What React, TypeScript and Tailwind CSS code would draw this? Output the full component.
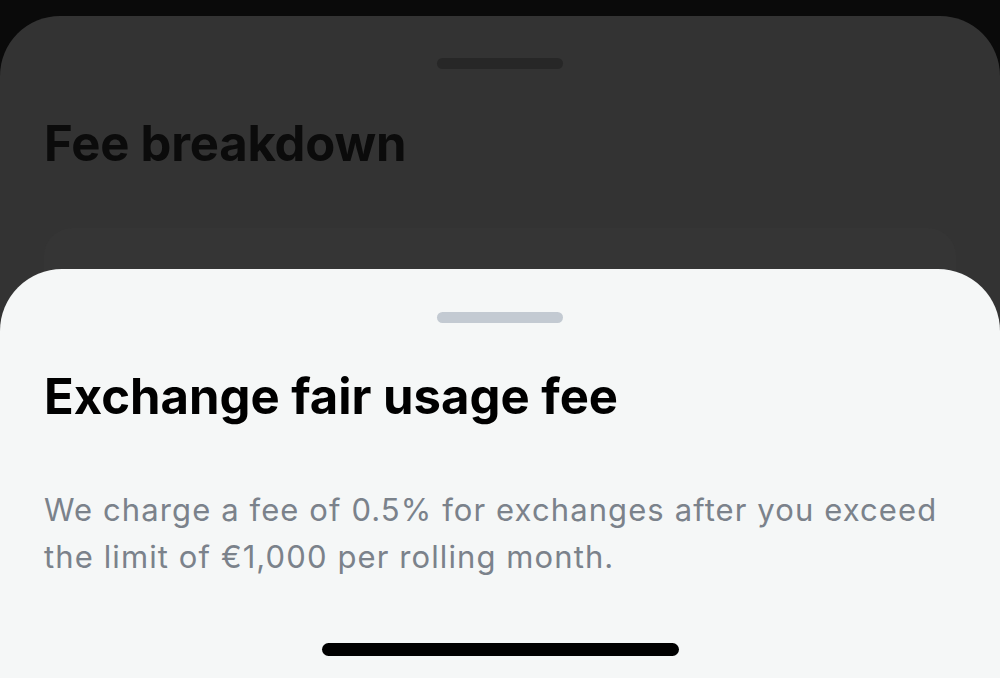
export default function App() {
  return (
    <div
      className="relative flex h-[678px] w-[1000px] flex-col overflow-hidden bg-[#0a0a0a] pt-[16px]"
      style={{ fontFamily: 'Inter, "Noto Sans", sans-serif' }}
    >
      {/* background sheet */}
      <div className="flex flex-1 flex-col rounded-t-[60px] bg-[#333333] px-[44px]">
        <div className="mx-auto mt-[42px] h-[11px] w-[126px] rounded-full bg-[#272727]" />
        <h1 className="mt-[47px] text-[49px] font-bold leading-[56px] tracking-[-0.2px] text-[#0b0b0b]">
          Fee breakdown
        </h1>
        <div className="mt-[56px] h-[200px] rounded-t-[28px] bg-[#353535]" />
      </div>

      {/* foreground sheet */}
      <div className="absolute inset-x-0 bottom-0 top-[269px] flex flex-col rounded-t-[62px] bg-[#f5f7f7] px-[44px]">
        <div className="mx-auto mt-[43px] h-[11px] w-[126px] rounded-full bg-[#c3cad2]" />
        <h2 className="mt-[46px] text-[49px] font-bold leading-[56px] text-black">
          Exchange fair usage fee
        </h2>
        <p className="mt-[61px] text-[31px] leading-[47px] tracking-[1.1px] text-[#7b828b]">
          We charge a fee of 0.5% for exchanges after you exceed the limit of €1,000 per rolling month.
        </p>
        <div className="mx-auto mt-auto mb-[22px] h-[13px] w-[357px] rounded-full bg-black" />
      </div>
    </div>
  );
}
